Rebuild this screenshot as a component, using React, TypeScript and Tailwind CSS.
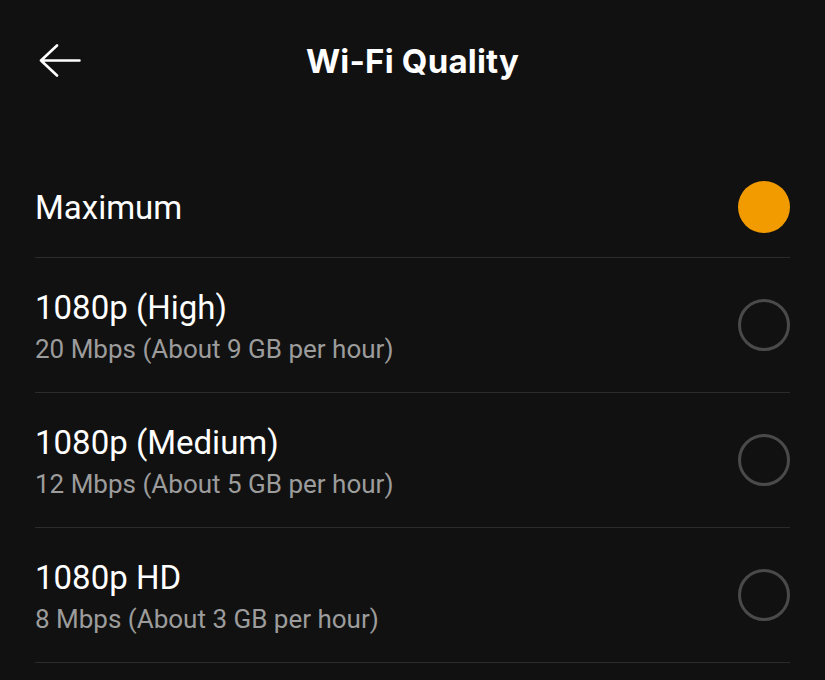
import React from "react";

type Option = {
  title: string;
  detail?: string;
};

const options: Option[] = [
  { title: "Maximum" },
  { title: "1080p (High)", detail: "20 Mbps (About 9 GB per hour)" },
  { title: "1080p (Medium)", detail: "12 Mbps (About 5 GB per hour)" },
  { title: "1080p HD", detail: "8 Mbps (About 3 GB per hour)" },
];

const BackArrow: React.FC = () => (
  <svg width="42" height="34" viewBox="0 0 42 34" fill="none">
    <path
      d="M2 16.5H40.5M18 1.5L2 16.5L18 31.5"
      stroke="white"
      strokeWidth="2.6"
      strokeLinecap="round"
      strokeLinejoin="round"
    />
  </svg>
);

const RadioDot: React.FC<{ checked: boolean }> = ({ checked }) =>
  checked ? (
    <div className="w-[52px] h-[52px] rounded-full bg-[#f29b00] shrink-0" />
  ) : (
    <div className="w-[52px] h-[52px] rounded-full border-[3px] border-[#4a4a4a] shrink-0" />
  );

export default function App() {
  const selected = 0;

  return (
    <div
      className="min-h-screen w-full bg-[#111111] text-white"
      style={{ fontFamily: "Roboto, 'Liberation Sans', sans-serif" }}
    >
      <header className="relative h-[120px] flex items-center justify-center">
        <button className="absolute left-[39px] top-[44px]">
          <BackArrow />
        </button>
        <h1
          className="text-[33px] font-bold leading-none tracking-[0.2px] mt-[2px]"
          style={{ fontFamily: "Inter, 'Noto Sans', sans-serif" }}
        >
          Wi-Fi Quality
        </h1>
      </header>

      <ul className="mt-[36px] px-[35px]">
        {options.map((opt, i) => (
          <li
            key={opt.title}
            className={
              "flex items-center justify-between border-b border-[#2b2b2b] " +
              (opt.detail ? "h-[135px]" : "h-[102px]")
            }
          >
            <div className="flex flex-col pt-[3px]">
              <span className="text-[33px] leading-[38px] text-white">
                {opt.title}
              </span>
              {opt.detail && (
                <span className="mt-[7px] text-[26px] leading-[30px] text-[#9c9c9c]">
                  {opt.detail}
                </span>
              )}
            </div>
            <RadioDot checked={i === selected} />
          </li>
        ))}
      </ul>
    </div>
  );
}
